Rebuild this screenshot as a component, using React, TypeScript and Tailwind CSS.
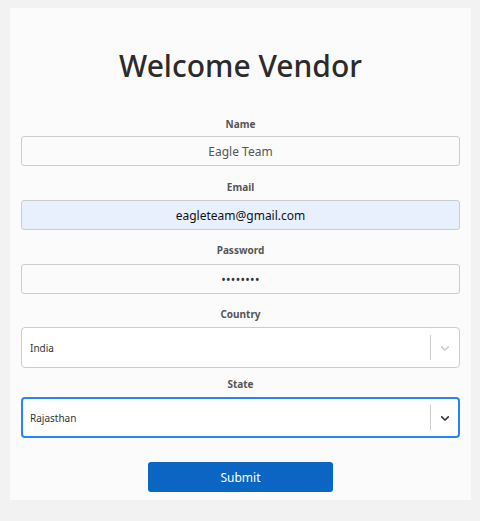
import React from "react";

const Chevron = ({ color }: { color: string }) => (
  <svg width="14" height="14" viewBox="0 0 20 20" fill={color} aria-hidden="true">
    <path d="M4.516 7.548c0.436-0.446 1.043-0.481 1.576 0l3.908 3.747 3.908-3.747c0.533-0.481 1.141-0.446 1.574 0 0.436 0.445 0.408 1.197 0 1.615-0.406 0.418-4.695 4.502-4.695 4.502-0.217 0.223-0.502 0.335-0.787 0.335s-0.57-0.112-0.789-0.335c0 0-4.287-4.084-4.695-4.502s-0.436-1.17 0-1.615z" />
  </svg>
);

export default function App() {
  const font = { fontFamily: '"Noto Sans", "Open Sans", Arial, sans-serif' };
  return (
    <div className="w-[480px] h-[521px] bg-[#f2f2f2] pt-[8px] pl-[10px]" style={font}>
      <div className="w-[461px] h-[492px] bg-[#fbfbfb] px-[11px] pt-[40px] flex flex-col">
        <h1 className="text-center text-[30px] leading-[36px] font-medium text-[#2b2b2b]">
          Welcome Vendor
        </h1>

        <label className="mt-[32px] block text-center text-[10px] leading-[16px] font-bold text-[#555]">
          Name
        </label>
        <div className="mt-[4px] h-[30px] pt-[2px] rounded-[3px] border border-[#cccccc] bg-[#fbfbfb] flex items-center justify-center text-[12px] text-[#555]">
          Eagle Team
        </div>

        <label className="mt-[13px] block text-center text-[10px] leading-[16px] font-bold text-[#555]">
          Email
        </label>
        <div className="mt-[5px] h-[30px] pt-[1px] rounded-[3px] border border-[#cccccc] bg-[#e8f0fe] flex items-center justify-center text-[12px] text-[#111]">
          eagleteam@gmail.com
        </div>

        <label className="mt-[12px] block text-center text-[10px] leading-[16px] font-bold text-[#555]">
          Password
        </label>
        <div className="mt-[6px] h-[30px] pt-[1px] rounded-[3px] border border-[#cccccc] bg-[#fbfbfb] flex items-center justify-center text-[12px] text-[#333] tracking-[0.3px]">
          ••••••••
        </div>

        <label className="mt-[12px] block text-center text-[10px] leading-[16px] font-bold text-[#555]">
          Country
        </label>
        <div className="mt-[5px] h-[41px] rounded-[4px] border border-[#cccccc] bg-white flex items-center">
          <div className="flex-1 pl-[8px] pt-[2px] text-[10px] text-[#333]">India</div>
          <div className="w-px self-stretch my-[7px] bg-[#cccccc]" />
          <div className="w-[28px] flex items-center justify-center">
            <Chevron color="#cccccc" />
          </div>
        </div>

        <label className="mt-[8px] block text-center text-[10px] leading-[16px] font-bold text-[#555]">
          State
        </label>
        <div className="mt-[5px] h-[41px] rounded-[4px] border-2 border-[#2684ff] bg-white flex items-center">
          <div className="flex-1 pl-[7px] pt-[2px] text-[10px] text-[#333]">Rajasthan</div>
          <div className="w-px self-stretch my-[6px] bg-[#cccccc]" />
          <div className="w-[27px] flex items-center justify-center">
            <Chevron color="#333333" />
          </div>
        </div>

        <div className="mt-[24px] flex justify-center">
          <button className="w-[185px] h-[30px] pt-[1px] rounded-[3px] bg-[#0b66c3] text-white text-[12px]" style={font}>
            Submit
          </button>
        </div>
      </div>
    </div>
  );
}
